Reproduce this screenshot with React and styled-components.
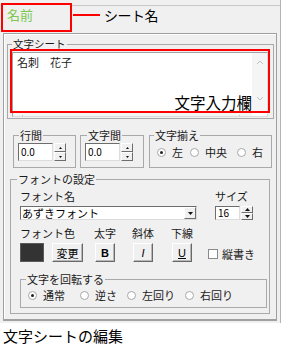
import React from "react";
import styled, { createGlobalStyle } from "styled-components";

const GlobalStyle = createGlobalStyle`
  html, body {
    margin: 0;
    padding: 0;
    background: #fff;
  }
  body {
    font-family: "Noto Sans CJK JP", "Noto Sans", sans-serif;
    color: #1a1a1a;
  }
  * {
    box-sizing: border-box;
  }
`;

const Window = styled.div`
  width: 281px;
  height: 323px;
  background: #f0f0f0;
  border-right: 1px solid #b4b4b4;
`;

// tab strip with the sheet name tab
const TabRow = styled.div`
  display: flex;
  align-items: flex-start;
  height: 33px;
  background: linear-gradient(
    to bottom,
    transparent 5px,
    #c9c9c9 5px,
    #c9c9c9 6px,
    transparent 6px
  );
`;

const SheetTab = styled.div`
  margin: 3px 0 0 1px;
  width: 71px;
  height: 29px;
  border: 2px solid #ff0000;
  background: #f0f0f0;
  padding: 2px 0 0 4px;
  color: #7cc94f;
  font-size: 13px;
  line-height: 16px;
`;

const CalloutLine = styled.div`
  width: 27px;
  height: 2px;
  margin: 14px 0 0 1px;
  background: #ff0000;
`;

const CalloutText = styled.div`
  margin: 6px 0 0 4px;
  font-size: 14px;
  line-height: 18px;
  letter-spacing: -0.5px;
  color: #000;
`;

const Panel = styled.div`
  margin-left: 3px;
  width: 274px;
  height: 288px;
  border: 1px solid #a0a0a0;
  border-bottom-width: 2px;
  box-shadow: inset 1px 1px 0 #fff;
  overflow: hidden;
`;

const GroupBox = styled.fieldset`
  margin: ${(p) => p.$m || 0};
  padding: 0;
  min-width: 0;
  width: ${(p) => p.$w}px;
  border: 1px solid #a9a9a9;
`;

const Legend = styled.legend`
  margin-left: ${(p) => p.$x}px;
  padding: 0 1px;
  font-size: ${(p) => p.$fs || 11}px;
  line-height: ${(p) => p.$lh || 12}px;
  white-space: nowrap;
`;

const GroupBody = styled.div`
  padding: ${(p) => p.$pad};
`;

// text input area
const TextBox = styled.div`
  position: relative;
  width: 256px;
  height: 65px;
  border: 1px solid;
  border-color: #a0a0a0 #dcdcdc #dcdcdc #a0a0a0;
  background: #fff;
`;

const TextClip = styled.div`
  height: 100%;
  overflow: hidden;
  display: grid;
  grid-template-columns: 1fr 15px;
  grid-template-rows: 60px 17px;
`;

const TextContent = styled.div`
  padding: 3px 4px;
  font-size: 11px;
  line-height: 13px;
`;

const VScroll = styled.div`
  background: #f5f5f5;
  display: flex;
  flex-direction: column;
  align-items: center;
  justify-content: space-between;
  padding: 6px 0 11px;
`;

const HScroll = styled.div`
  background: #f5f5f5;
  display: flex;
  justify-content: space-between;
  padding: 1px 8px 0 5px;
`;

const Highlight = styled.div`
  position: absolute;
  left: -3px;
  top: -4px;
  width: 260px;
  height: 64px;
  border: 2px solid #ff0000;
  display: flex;
  align-items: flex-end;
  justify-content: flex-end;
  padding-right: 16px;
  pointer-events: none;
`;

const HighlightText = styled.span`
  font-size: 15.5px;
  line-height: 18px;
  color: #000;
`;

const SpacingRow = styled.div`
  display: flex;
  align-items: stretch;
  margin-top: 10px;
  padding-left: 9px;
`;

// spin edit
const SpinBox = styled.div`
  display: flex;
  height: ${(p) => p.$h}px;
`;

const Field = styled.div`
  width: ${(p) => p.$w}px;
  height: 100%;
  background: #fff;
  border: 1px solid;
  border-color: #6d6d6d #dcdcdc #dcdcdc #6d6d6d;
  font-size: 10px;
  line-height: ${(p) => p.$lh}px;
  padding-left: 2px;
  color: #000;
`;

const SpinButtons = styled.div`
  width: 12px;
  margin-left: 1px;
  display: flex;
  flex-direction: column;
`;

const SpinHalf = styled.div`
  flex: 1;
  display: flex;
  align-items: center;
  justify-content: center;
  background: #f0f0f0;
  border: 1px solid;
  border-color: #fff #6d6d6d #6d6d6d #fff;
`;

const RadioRow = styled.div`
  display: flex;
  align-items: center;
  height: 12px;
`;

const RadioItem = styled.div`
  display: flex;
  align-items: center;
  gap: 6px;
  margin-left: ${(p) => p.$ml || 0}px;
  font-size: 11px;
  line-height: 12px;
  white-space: nowrap;
`;

const RadioDot = styled.span`
  position: relative;
  width: 9px;
  height: 9px;
  border-radius: 50%;
  border: 1px solid #a8a8a8;
  background: #fff;

  &::after {
    content: "";
    display: ${(p) => (p.$checked ? "block" : "none")};
    position: absolute;
    left: 2px;
    top: 2px;
    width: 3px;
    height: 3px;
    border-radius: 50%;
    background: #222;
  }
`;

const NameRow = styled.div`
  display: flex;
`;

const Column = styled.div`
  display: flex;
  flex-direction: column;
  width: ${(p) => p.$w}px;
  margin-left: ${(p) => p.$ml || 0}px;
`;

const Label = styled.div`
  font-size: 11px;
  line-height: 12px;
  white-space: nowrap;
`;

const Select = styled.div`
  display: flex;
  margin-top: 4px;
  width: 177px;
  height: 14px;
  background: #fff;
  border: 1px solid;
  border-color: #6d6d6d #dcdcdc #dcdcdc #6d6d6d;
`;

const SelectText = styled.span`
  flex: 1;
  font-size: 11px;
  line-height: 12px;
  padding-left: 1px;
  color: #000;
`;

const DropButton = styled.span`
  width: 12px;
  display: flex;
  align-items: center;
  justify-content: center;
  background: #f0f0f0;
  border: 1px solid;
  border-color: #fff #6d6d6d #6d6d6d #fff;
`;

const ToolRow = styled.div`
  display: flex;
  align-items: flex-end;
  margin-top: 7px;
`;

const ToolCol = styled.div`
  display: flex;
  flex-direction: column;
  align-items: ${(p) => (p.$center ? "center" : "flex-start")};
  width: ${(p) => (p.$w ? `${p.$w}px` : "auto")};
  margin-left: ${(p) => p.$ml || 0}px;
`;

const ButtonPair = styled.div`
  display: flex;
  gap: 8px;
  margin-top: 4px;
`;

const Swatch = styled.div`
  width: 24px;
  height: 19px;
  background: #333;
  border: 1px solid #5a5a5a;
`;

const PushButton = styled.div`
  width: ${(p) => p.$w}px;
  height: 19px;
  margin-top: ${(p) => p.$mt || 0}px;
  display: flex;
  align-items: center;
  justify-content: center;
  background: #f0f0f0;
  border: 1px solid;
  border-color: #fff #696969 #696969 #fff;
  box-shadow: inset -1px -1px 0 #b8b8b8;
  font-size: 11px;
  line-height: 12px;
  color: #000;
`;

const StyleGlyph = styled.span`
  font-family: "Liberation Sans", "DejaVu Sans", sans-serif;
  font-size: 11px;
  font-weight: ${(p) => (p.$bold ? 700 : 400)};
  font-style: ${(p) => (p.$italic ? "italic" : "normal")};
  text-decoration: ${(p) => (p.$underline ? "underline" : "none")};
`;

const CheckItem = styled.div`
  display: flex;
  align-items: center;
  gap: 4px;
  margin: 0 0 2px 16px;
  font-size: 11px;
  line-height: 12px;
`;

const CheckBox = styled.span`
  width: 10px;
  height: 10px;
  background: #fff;
  border: 1px solid #8a8a8a;
`;

const Caption = styled.div`
  margin-top: 4px;
  padding-left: 3px;
  font-size: 15px;
  line-height: 17px;
  color: #000;
`;

const Chevron = ({ dir }) => {
  const paths = {
    up: "M1 5 L4 2 L7 5",
    down: "M1 3 L4 6 L7 3",
    left: "M5 1 L2 4 L5 7",
    right: "M3 1 L6 4 L3 7",
  };
  return (
    <svg width="8" height="8" viewBox="0 0 8 8">
      <path d={paths[dir]} fill="none" stroke="#c0c0c0" strokeWidth="1" />
    </svg>
  );
};

const Triangle = ({ up, size = 3 }) => (
  <svg width={size * 2 - 1} height={size} viewBox={`0 0 ${size * 2 - 1} ${size}`}>
    <path
      d={
        up
          ? `M0 ${size} L${size - 0.5} 0 L${size * 2 - 1} ${size} Z`
          : `M0 0 L${size - 0.5} ${size} L${size * 2 - 1} 0 Z`
      }
      fill="#111"
    />
  </svg>
);

const Spinner = ({ value, w, h, lh, size }) => (
  <SpinBox $h={h}>
    <Field $w={w} $lh={lh}>
      {value}
    </Field>
    <SpinButtons>
      <SpinHalf>
        <Triangle up size={size} />
      </SpinHalf>
      <SpinHalf>
        <Triangle size={size} />
      </SpinHalf>
    </SpinButtons>
  </SpinBox>
);

const Radio = ({ label, checked, ml }) => (
  <RadioItem $ml={ml}>
    <RadioDot $checked={checked} />
    {label}
  </RadioItem>
);

export default function App() {
  return (
    <>
      <GlobalStyle />
      <Window>
        <TabRow>
          <SheetTab>名前</SheetTab>
          <CalloutLine />
          <CalloutText>シート名</CalloutText>
        </TabRow>

        <Panel>
          <GroupBox $w={267} $m="5px 0 0 3px">
            <Legend $x={4} $fs={10.5} $lh={10}>
              文字シート
            </Legend>
            <GroupBody $pad="3px 0 1px 4px">
              <TextBox>
                <TextClip>
                  <TextContent>名刺　花子</TextContent>
                  <VScroll>
                    <Chevron dir="up" />
                    <Chevron dir="down" />
                  </VScroll>
                  <HScroll>
                    <Chevron dir="left" />
                    <Chevron dir="right" />
                  </HScroll>
                </TextClip>
                <Highlight>
                  <HighlightText>文字入力欄</HighlightText>
                </Highlight>
              </TextBox>
            </GroupBody>
          </GroupBox>

          <SpacingRow>
            <GroupBox $w={63}>
              <Legend $x={5}>行間</Legend>
              <GroupBody $pad="2px 0 6px 4px">
                <Spinner value="0.0" w={35} h={18} lh={15} size={2} />
              </GroupBody>
            </GroupBox>
            <GroupBox $w={64} $m="0 0 0 4px">
              <Legend $x={6}>文字間</Legend>
              <GroupBody $pad="2px 0 6px 4px">
                <Spinner value="0.0" w={35} h={18} lh={15} size={2} />
              </GroupBody>
            </GroupBox>
            <GroupBox $w={123} $m="0 0 0 5px">
              <Legend $x={4}>文字揃え</Legend>
              <GroupBody $pad="5px 0 0 7px">
                <RadioRow>
                  <Radio label="左" checked />
                  <Radio label="中央" ml={7} />
                  <Radio label="右" ml={10} />
                </RadioRow>
              </GroupBody>
            </GroupBox>
          </SpacingRow>

          <GroupBox $w={260} $m="5px 0 0 6px">
            <Legend $x={6}>フォントの設定</Legend>
            <GroupBody $pad="5px 0 5px 9px">
              <NameRow>
                <Column $w={177}>
                  <Label>フォント名</Label>
                  <Select>
                    <SelectText>あずきフォント</SelectText>
                    <DropButton>
                      <Triangle size={3} />
                    </DropButton>
                  </Select>
                </Column>
                <Column $w={38} $ml={18}>
                  <Label>サイズ</Label>
                  <SpinBox $h={14} style={{ marginTop: 4 }}>
                    <Field $w={26} $lh={11}>
                      16
                    </Field>
                    <SpinButtons>
                      <SpinHalf>
                        <Triangle up size={3} />
                      </SpinHalf>
                      <SpinHalf>
                        <Triangle size={3} />
                      </SpinHalf>
                    </SpinButtons>
                  </SpinBox>
                </Column>
              </NameRow>

              <ToolRow>
                <ToolCol>
                  <Label>フォント色</Label>
                  <ButtonPair>
                    <Swatch />
                    <PushButton $w={31}>変更</PushButton>
                  </ButtonPair>
                </ToolCol>
                <ToolCol $center $w={20} $ml={12}>
                  <Label>太字</Label>
                  <PushButton $w={20} $mt={4}>
                    <StyleGlyph $bold>B</StyleGlyph>
                  </PushButton>
                </ToolCol>
                <ToolCol $center $w={20} $ml={18}>
                  <Label>斜体</Label>
                  <PushButton $w={20} $mt={4}>
                    <StyleGlyph $italic>I</StyleGlyph>
                  </PushButton>
                </ToolCol>
                <ToolCol $center $w={20} $ml={19}>
                  <Label>下線</Label>
                  <PushButton $w={20} $mt={4}>
                    <StyleGlyph $underline>U</StyleGlyph>
                  </PushButton>
                </ToolCol>
                <CheckItem>
                  <CheckBox />
                  縦書き
                </CheckItem>
              </ToolRow>

              <GroupBox $w={247} $m="11px 0 0 0">
                <Legend $x={5}>文字を回転する</Legend>
                <GroupBody $pad="4px 0 6px 7px">
                  <RadioRow>
                    <Radio label="通常" checked />
                    <Radio label="逆さ" ml={15} />
                    <Radio label="左回り" ml={10} />
                    <Radio label="右回り" ml={10} />
                  </RadioRow>
                </GroupBody>
              </GroupBox>
            </GroupBody>
          </GroupBox>
        </Panel>
      </Window>
      <Caption>文字シートの編集</Caption>
    </>
  );
}
